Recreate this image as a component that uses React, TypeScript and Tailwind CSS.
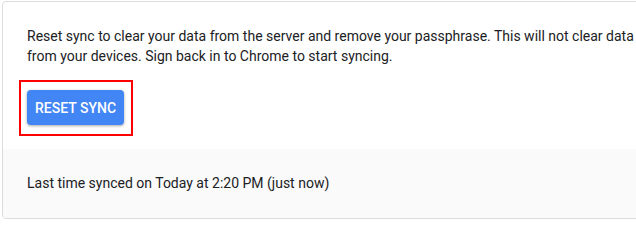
export default function App() {
  return (
    <div className="w-[636px] h-[220px] overflow-hidden bg-white pt-px pl-[2px] font-['Roboto','Liberation_Sans',sans-serif] text-[14px] leading-5 text-[#202124]">
      <div className="w-[660px] rounded-[4px] border border-[#dadce0] overflow-hidden">
        <section className="px-6 pt-6 pb-[13px]">
          <p>
            Reset sync to clear your data from the server and remove your passphrase. This will not clear data
            from your devices. Sign back in to Chrome to start syncing.
          </p>
          <div className="mt-[14px] -ml-2 inline-block border-2 border-[#ff0000] pl-[6px] pt-[8px] pr-[7px] pb-[9px]">
            <button className="h-[35px] rounded-[4px] bg-[#4285f4] px-2 text-[14px] font-medium uppercase text-white shadow-[0_1px_3px_rgba(0,0,0,0.35)]">
              Reset sync
            </button>
          </div>
        </section>
        <section className="bg-[#fafafa] px-6 pt-[24px] pb-[25px]">
          <p>Last time synced on Today at 2:20 PM (just now)</p>
        </section>
      </div>
    </div>
  );
}
